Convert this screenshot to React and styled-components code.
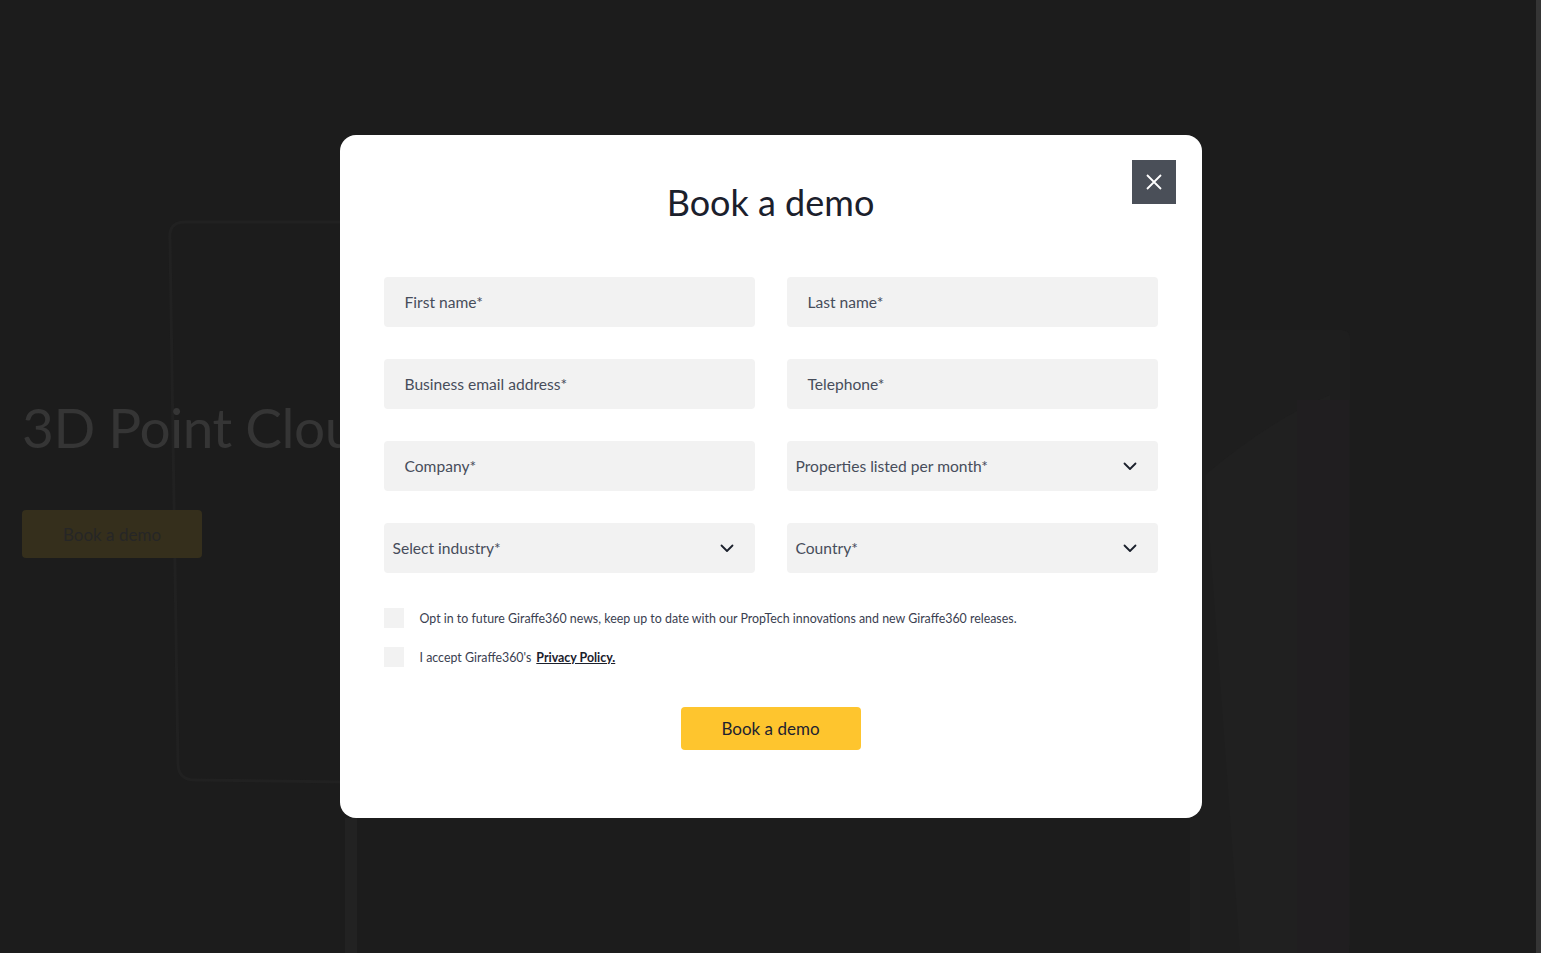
import React from 'react';
import styled, { createGlobalStyle } from 'styled-components';

const GlobalStyle = createGlobalStyle`
  html, body {
    margin: 0;
    padding: 0;
    background: #1c1c1c;
    overflow: hidden;
  }
  * {
    box-sizing: border-box;
  }
`;

const Screen = styled.div`
  display: flex;
  width: 100vw;
  height: 100vh;
  font-family: Lato, "Noto Sans", sans-serif;
`;

const Page = styled.main`
  position: relative;
  flex: 1;
  background: #1c1c1c;
  overflow: hidden;
`;

const ScrollTrack = styled.div`
  width: 5px;
  background: #353535;
`;

const Hero = styled.section`
  position: relative;
  z-index: 1;
  padding: 393px 0 0 22px;
`;

const HeroTitle = styled.h1`
  margin: 0;
  font-family: Lato, sans-serif;
  font-weight: 400;
  font-size: 55px;
  line-height: 68px;
  letter-spacing: -0.5px;
  color: #353535;
  white-space: nowrap;
`;

const HeroButton = styled.div`
  display: flex;
  align-items: center;
  justify-content: center;
  width: 180px;
  height: 48px;
  margin-top: 49px;
  border-radius: 4px;
  background: #352f1c;
  color: #262626;
  font-size: 17px;
`;

const Illustration = styled.svg`
  position: absolute;
  inset: 0;
  width: 100%;
  height: 100%;
  pointer-events: none;
`;

const Overlay = styled.div`
  position: fixed;
  inset: 0;
  z-index: 10;
  display: flex;
  justify-content: center;
  align-items: flex-start;
  padding-top: 135px;
`;

const Modal = styled.div`
  position: relative;
  width: 862px;
  height: 683px;
  padding: 46px 44px 0;
  background: #ffffff;
  border-radius: 16px;
`;

const CloseButton = styled.button`
  position: absolute;
  top: 25px;
  right: 26px;
  display: flex;
  align-items: center;
  justify-content: center;
  width: 44px;
  height: 44px;
  padding: 0;
  border: none;
  background: #4a4f58;
  cursor: pointer;
`;

const Title = styled.h2`
  margin: 0;
  text-align: center;
  font-family: Lato, sans-serif;
  font-weight: 400;
  font-size: 36px;
  line-height: 42px;
  color: #1b202c;
`;

const FieldGrid = styled.div`
  display: grid;
  grid-template-columns: 371px 371px;
  column-gap: 32px;
  row-gap: 32px;
  margin-top: 54px;
`;

const Field = styled.div`
  display: flex;
  align-items: center;
  justify-content: space-between;
  height: 50px;
  padding: 0 ${(p) => (p.$select ? '21px 0 9px' : '0 0 21px')};
  background: #f2f2f2;
  border-radius: 4px;
  font-size: 15.6px;
  color: #474d5b;
`;

const Checks = styled.div`
  display: flex;
  flex-direction: column;
  gap: 19px;
  margin-top: 35px;
`;

const CheckRow = styled.label`
  display: flex;
  align-items: center;
  gap: 16px;
  font-size: 12.4px;
  color: #3a4050;
`;

const Box = styled.span`
  flex: none;
  width: 20px;
  height: 20px;
  background: #f2f2f2;
`;

const PolicyLink = styled.a`
  margin-left: 5px;
  color: #1b202c;
  font-weight: 700;
  text-decoration: underline;
`;

const Submit = styled.button`
  display: block;
  width: 180px;
  height: 43px;
  margin: 40px auto 0;
  border: none;
  border-radius: 4px;
  background: #fec52e;
  color: #1d2230;
  font-family: Lato, sans-serif;
  font-size: 17px;
  cursor: pointer;
`;

const Chevron = () => (
  <svg width="14" height="9" viewBox="0 0 14 9" fill="none">
    <path d="M1.5 1.5 7 7l5.5-5.5" stroke="#1b202c" strokeWidth="1.8" strokeLinecap="round" strokeLinejoin="round" />
  </svg>
);

const fields = [
  { label: 'First name*' },
  { label: 'Last name*' },
  { label: 'Business email address*' },
  { label: 'Telephone*' },
  { label: 'Company*' },
  { label: 'Properties listed per month*', select: true },
  { label: 'Select industry*', select: true },
  { label: 'Country*', select: true },
];

const App = () => {
  return (
    <Screen>
      <GlobalStyle />
      <Page>
        <Illustration viewBox="0 0 1536 953" preserveAspectRatio="none">
          <path d="M345 222 L185 222 Q168 222 170 240 L178 765 Q179 780 195 780 L345 782" stroke="#212121" strokeWidth="3" fill="none" />
          <rect x="1195" y="330" width="155" height="623" rx="8" fill="#1e1e1e" />
          <path d="M1205 475 Q1270 420 1330 395 L1330 953 L1240 953 Z" fill="#202020" />
          <rect x="1297" y="400" width="52" height="553" fill="#201e20" />
          <rect x="345" y="818" width="12" height="135" fill="#222222" />
          <rect x="1190" y="818" width="10" height="135" fill="#1f1f1f" />
        </Illustration>
        <Hero>
          <HeroTitle>3D Point Cloud</HeroTitle>
          <HeroButton>Book a demo</HeroButton>
        </Hero>
      </Page>
      <ScrollTrack />
      <Overlay>
        <Modal>
          <CloseButton aria-label="Close">
            <svg width="16" height="16" viewBox="0 0 16 16">
              <path d="M1 1l14 14M15 1 1 15" stroke="#ffffff" strokeWidth="1.8" />
            </svg>
          </CloseButton>
          <Title>Book a demo</Title>
          <FieldGrid>
            {fields.map((f) => (
              <Field key={f.label} $select={f.select}>
                <span>{f.label}</span>
                {f.select && <Chevron />}
              </Field>
            ))}
          </FieldGrid>
          <Checks>
            <CheckRow>
              <Box />
              Opt in to future Giraffe360 news, keep up to date with our PropTech innovations and new Giraffe360 releases.
            </CheckRow>
            <CheckRow>
              <Box />
              <span>
                I accept Giraffe360's<PolicyLink href="#">Privacy Policy.</PolicyLink>
              </span>
            </CheckRow>
          </Checks>
          <Submit>Book a demo</Submit>
        </Modal>
      </Overlay>
    </Screen>
  );
};

export default App;
